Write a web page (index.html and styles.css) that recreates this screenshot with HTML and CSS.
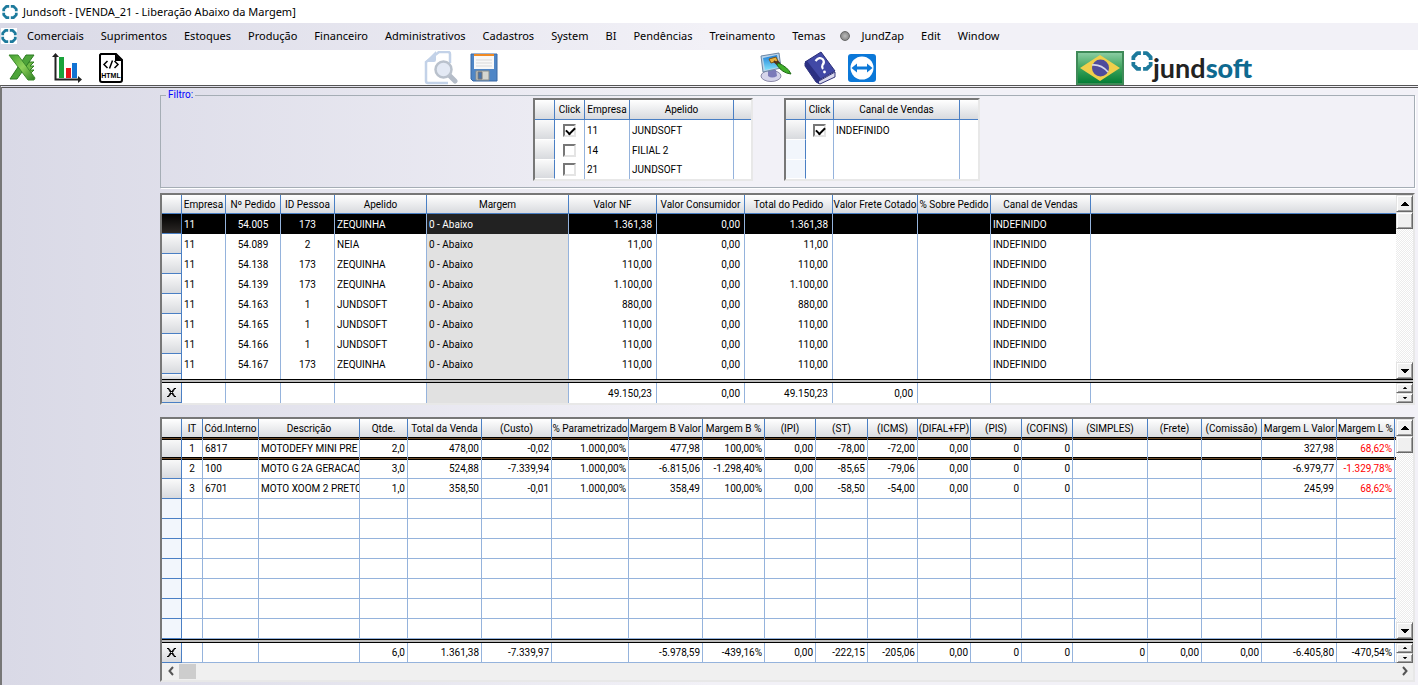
FILE: index.html
```html
<!DOCTYPE html>
<html lang="pt-BR">
<head>
<meta charset="utf-8">
<title>Jundsoft - [VENDA_21 - Liberação Abaixo da Margem]</title>
<link rel="stylesheet" href="styles.css">
</head>
<body>
<svg class="defs" width="0" height="0" aria-hidden="true">
  <symbol id="mark" viewBox="1 1 14 14">
    <path d="M7.300 3H5L2.500 5.500v1.800M8.700 3H11l2.500 2.500v1.800M7.300 13H5l-2.500-2.500V8.700M8.700 13H11l2.500-2.500V8.700" fill="none" stroke="#1d7a9c" stroke-width="2.400" stroke-linejoin="round"/>
  </symbol>
  <symbol id="up" viewBox="0 0 8 4"><path d="M3 0h2v1h1v1h1v1h1v1H0V3h1V2h1V1h1z"/></symbol>
  <symbol id="down" viewBox="0 0 8 4"><path d="M0 0h8v1H7v1H6v1H5v1H3V3H2V2H1V1H0z"/></symbol>
  <symbol id="sum" viewBox="0 0 9 9"><path d="M0 .5h2l2 3h1l2-3h2M0 8.500h2l2-3h1l2 3h2M3 3.500h3M3 5.500h3M1.500 1l2 3.500-2 3.500M7.500 1l-2 3.500 2 3.500" fill="none" stroke="#000"/></symbol>
</svg>

<header class="titlebar">
  <svg class="mark"><use href="#mark"/></svg>
  <h1>Jundsoft - [VENDA_21 - Liberação Abaixo da Margem]</h1>
</header>

<nav class="menu">
  <span class="mark-box"><svg class="mark"><use href="#mark"/></svg></span>
  <button>Comerciais</button>
  <button>Suprimentos</button>
  <button>Estoques</button>
  <button>Produção</button>
  <button>Financeiro</button>
  <button>Administrativos</button>
  <button>Cadastros</button>
  <button>System</button>
  <button>BI</button>
  <button>Pendências</button>
  <button>Treinamento</button>
  <button>Temas</button>
  <button class="zap"><span class="dot"></span>JundZap</button>
  <button>Edit</button>
  <button>Window</button>
</nav>

<div class="toolbar">
  <div class="tools files">
    <button aria-label="Excel">
      <svg width="28" height="28" viewBox="0 0 28 28">
        <defs><linearGradient id="xg" x1="0" y1="0" x2="1" y2="1"><stop offset="0" stop-color="#3f9d2f"/><stop offset=".5" stop-color="#8fd25a"/><stop offset="1" stop-color="#2b7d22"/></linearGradient></defs>
        <path d="M19 8h7l-4 4h4l-4 4h4l-4 4h-5z" fill="#6cb844" stroke="#2f7f25"/>
        <path d="M18 1h8L9 25H2z" fill="#4da43a" stroke="#2c7a22"/>
        <path d="M1 1h9l17 23-1 2h-6z" fill="url(#xg)" stroke="#3b8a2c"/>
      </svg>
    </button>
    <button aria-label="Gráfico">
      <svg width="32" height="32" viewBox="0 0 32 32">
        <path d="M4.500 4v23.500H28" fill="none" stroke="#222" stroke-width="2"/>
        <path d="M1 5l3.500-4L8 5zM27 24l4 3.500-4 3.500z" fill="#222"/>
        <path d="M8 5h5v21H8z" fill="#19a33b"/><path d="M15 16h5v10h-5z" fill="#e6161b"/><path d="M21 11h5v15h-5z" fill="#1273d3"/>
      </svg>
    </button>
    <button aria-label="HTML">
      <svg width="26" height="32" viewBox="0 0 26 32">
        <path d="M3 2h15l6 6v20q0 2-2 2H4q-2 0-2-2V3z" fill="#fff" stroke="#000" stroke-width="2"/>
        <path d="M17 2l7 7h-7z"/>
        <path d="M9.500 9L6 12.500 9.500 16M16.500 9l3.500 3.500-3.500 3.500M14.500 8.500l-3 8" fill="none" stroke="#000" stroke-width="1.500"/>
        <text x="13" y="25.500" class="html-label">HTML</text>
      </svg>
    </button>
  </div>
  <div class="tools">
    <button aria-label="Visualizar" disabled>
      <svg width="34" height="34" viewBox="0 0 34 34">
        <path d="M26 12V3q0-2-2-2h-9L2 11v19q0 2 2 2h20" fill="none" stroke="#c3d2e8" stroke-width="2.500"/>
        <path d="M12 0v9q0 2-2 2H1z" fill="#c3d2e8"/>
        <path d="M25 24l6 6" stroke="#b4bcc8" stroke-width="5" stroke-linecap="round"/>
        <circle cx="19.500" cy="18.500" r="8" fill="#e3e9f4" stroke="#b9c1cc" stroke-width="2.500"/>
      </svg>
    </button>
    <button aria-label="Salvar">
      <svg width="28" height="30" viewBox="0 0 28 30">
        <path d="M1 1h26v27H3l-2-2z" fill="#4f86c6" stroke="#3a68a4"/>
        <path d="M4 1h20v2H4z" fill="#f08a24"/><path d="M4 3h20v13H4z" fill="#f8f8f8"/>
        <path d="M6 7h16M6 10h16M6 13h16" stroke="#d9d9d9"/>
        <path d="M6 18h13v9H6z" fill="#d5d6d0" stroke="#8b8f8d"/><path d="M8 19h4v7H8z" fill="#4775ad" stroke="#777"/>
      </svg>
    </button>
  </div>
  <div class="tools">
    <button aria-label="Temas">
      <svg width="32" height="32" viewBox="0 0 32 32">
        <defs><linearGradient id="mg" x1="0" y1="0" x2="0" y2="1"><stop offset="0" stop-color="#1f7fd6"/><stop offset="1" stop-color="#7fe0fb"/></linearGradient></defs>
        <ellipse cx="11" cy="24" rx="10" ry="5.500" fill="#d5d4ea" stroke="#8a89a8"/>
        <path d="M8 18h8l1 6q-5 3-9 0z" fill="#7b7ab8"/>
        <path d="M1 4l18-3 2 15-18 4z" fill="#b9d4ea" stroke="#6d86a4"/><path d="M3 6l14-3 2 12-14 3z" fill="url(#mg)"/>
        <path d="M9 7l7-2 2 4-7 2z" fill="#e9b23e" stroke="#7a5418"/>
        <path d="M14 9l5 5M17 9l3 3" stroke="#50301a" stroke-width="2"/>
        <path d="M18 11q10 4 13 11-9-1-14-9z" fill="#3fae2a" stroke="#1d6a14"/>
      </svg>
    </button>
    <button aria-label="Ajuda">
      <svg width="32" height="34" viewBox="0 0 32 34">
        <path d="M1 12L15 30l16-9v5L16 33 12 31 1 15z" fill="#d9d9ec" stroke="#34367c"/>
        <path d="M1 11L17 1l14 19-16 9z" fill="#4149a6" stroke="#2a2e78"/>
        <path d="M1 11l2-1 14 18-2 2v3l-3-2L1 15z" fill="#2b3082"/>
        <path d="M11.500 10q4-5 7.500-1.500 2 3-.5 5.500-1 2 .5 4" fill="none" stroke="#fff" stroke-width="2.200"/><circle cx="20.500" cy="21" r="1.400" fill="#fff"/>
      </svg>
    </button>
    <button aria-label="Acesso remoto">
      <svg width="28" height="28" viewBox="0 0 28 28">
        <rect width="28" height="28" rx="3" fill="#0b78d8"/><circle cx="14" cy="14" r="11.500" fill="#fff"/>
        <path d="M3.500 14L9 9.500v3h10v-3l5.500 4.500-5.500 4.500v-3H9v3z" fill="#0b78d8"/>
      </svg>
    </button>
  </div>
  <div class="brand">
    <svg width="48" height="34" viewBox="0 0 48 34" role="img" aria-label="Brasil">
      <defs><linearGradient id="fg" x1="0" y1="0" x2="0" y2="1"><stop offset="0" stop-color="#8fcfa6"/><stop offset=".5" stop-color="#3da45c"/><stop offset="1" stop-color="#007a33"/></linearGradient></defs>
      <path d="M1 1h46v32H1z" fill="url(#fg)" stroke="#3f8a58" stroke-width="2"/>
      <path d="M24 4l20 13-20 13L4 17z" fill="#f0cf4b"/><circle cx="24.500" cy="17" r="8.500" fill="#4f4c9c"/>
      <path d="M16 14q9-1 16 7" fill="none" stroke="#d8d8ea" stroke-width="1.600"/>
    </svg>
    <span class="logo"><svg class="logo-mark"><use href="#mark"/></svg><span class="logo-word">jund<b>soft</b></span></span>
  </div>
</div>

<main class="desk">
  <section class="work">
    <fieldset class="filter">
      <legend>Filtro:</legend>
      <div class="frame company">
        <table class="sheet plain">
          <colgroup><col class="w20"><col class="w30"><col class="w45"><col class="w104"><col></colgroup>
          <thead><tr><th><th>Click<th>Empresa<th>Apelido<th></thead>
          <tbody>
            <tr><th><td class="c"><input type="checkbox" aria-label="Empresa 11" checked><td>11<td>JUNDSOFT<td>
            <tr><th><td class="c"><input type="checkbox" aria-label="Empresa 14"><td>14<td>FILIAL 2<td>
            <tr><th><td class="c"><input type="checkbox" aria-label="Empresa 21"><td>21<td>JUNDSOFT<td>
          </tbody>
        </table>
      </div>
      <div class="frame channel">
        <table class="sheet plain">
          <colgroup><col class="w20"><col class="w28"><col class="w126"><col></colgroup>
          <thead><tr><th><th>Click<th>Canal de Vendas<th></thead>
          <tbody>
            <tr><th><td class="c"><input type="checkbox" aria-label="Canal INDEFINIDO" checked><td>INDEFINIDO<td>
            <tr class="void"><th><td><td><td>
            <tr class="void"><th><td><td><td>
          </tbody>
        </table>
      </div>
    </fieldset>

    <div class="frame">
      <div class="pane">
        <table class="sheet orders">
          <colgroup><col class="w20"><col class="w44"><col class="w55"><col class="w54"><col class="w92"><col class="w142"><col class="w88"><col class="w88"><col class="w88"><col class="w85"><col class="w73"><col class="w100"><col></colgroup>
          <thead><tr><th><th>Empresa<th>Nº Pedido<th>ID Pessoa<th>Apelido<th>Margem<th>Valor NF<th>Valor Consumidor<th>Total do Pedido<th>Valor Frete Cotado<th>% Sobre Pedido<th>Canal de Vendas<th></thead>
          <tbody>
            <tr class="selected"><th><td>11<td>54.005<td>173<td>ZEQUINHA<td>0 - Abaixo<td>1.361,38<td>0,00<td>1.361,38<td><td><td>INDEFINIDO<td>
            <tr><th><td>11<td>54.089<td>2<td>NEIA<td>0 - Abaixo<td>11,00<td>0,00<td>11,00<td><td><td>INDEFINIDO<td>
            <tr><th><td>11<td>54.138<td>173<td>ZEQUINHA<td>0 - Abaixo<td>110,00<td>0,00<td>110,00<td><td><td>INDEFINIDO<td>
            <tr><th><td>11<td>54.139<td>173<td>ZEQUINHA<td>0 - Abaixo<td>1.100,00<td>0,00<td>1.100,00<td><td><td>INDEFINIDO<td>
            <tr><th><td>11<td>54.163<td>1<td>JUNDSOFT<td>0 - Abaixo<td>880,00<td>0,00<td>880,00<td><td><td>INDEFINIDO<td>
            <tr><th><td>11<td>54.165<td>1<td>JUNDSOFT<td>0 - Abaixo<td>110,00<td>0,00<td>110,00<td><td><td>INDEFINIDO<td>
            <tr><th><td>11<td>54.166<td>1<td>JUNDSOFT<td>0 - Abaixo<td>110,00<td>0,00<td>110,00<td><td><td>INDEFINIDO<td>
            <tr><th><td>11<td>54.167<td>173<td>ZEQUINHA<td>0 - Abaixo<td>110,00<td>0,00<td>110,00<td><td><td>INDEFINIDO<td>
            <tr class="cut"><th><td><td><td><td><td><td><td><td><td><td><td><td>
          </tbody>
        </table>
        <div class="scroll"><button aria-label="Subir"><svg><use href="#up"/></svg></button><span class="thumb"></span><button class="end" aria-label="Descer"><svg><use href="#down"/></svg></button></div>
      </div>
      <div class="split"></div>
      <div class="pane">
        <table class="sheet orders totals">
          <colgroup><col class="w20"><col class="w44"><col class="w55"><col class="w54"><col class="w92"><col class="w142"><col class="w88"><col class="w88"><col class="w88"><col class="w85"><col class="w73"><col class="w100"><col></colgroup>
          <tbody><tr><th><svg class="sum"><use href="#sum"/></svg><td><td><td><td><td><td>49.150,23<td>0,00<td>49.150,23<td>0,00<td><td><td></tbody>
        </table>
        <div class="spin"><button aria-label="Anterior"><svg><use href="#up"/></svg></button><button aria-label="Próximo"><svg><use href="#down"/></svg></button></div>
      </div>
    </div>

    <div class="frame items-frame">
      <div class="pane">
        <table class="sheet items">
          <colgroup><col class="w20"><col class="w21"><col class="w56"><col class="w101"><col class="w48"><col class="w74"><col class="w70"><col class="w77"><col class="w74"><col class="w62"><col class="w51"><col class="w52"><col class="w50"><col class="w53"><col class="w51"><col class="w51"><col class="w75"><col class="w54"><col class="w60"><col class="w75"><col class="w58"><col></colgroup>
          <thead><tr><th><th>IT<th>Cód.Interno<th>Descrição<th>Qtde.<th>Total da Venda<th>(Custo)<th>% Parametrizado<th>Margem B Valor<th>Margem B %<th>(IPI)<th>(ST)<th>(ICMS)<th>(DIFAL+FP)<th>(PIS)<th>(COFINS)<th>(SIMPLES)<th>(Frete)<th>(Comissão)<th>Margem L Valor<th>Margem L %<th></thead>
          <tbody>
            <tr class="current"><th><td>1<td>6817<td>MOTODEFY MINI PRE<td>2,0<td>478,00<td>-0,02<td>1.000,00%<td>477,98<td>100,00%<td>0,00<td>-78,00<td>-72,00<td>0,00<td>0<td>0<td><td><td><td>327,98<td>68,62%<td>
            <tr><th><td>2<td>100<td>MOTO G 2A GERACAO<td>3,0<td>524,88<td>-7.339,94<td>1.000,00%<td>-6.815,06<td>-1.298,40%<td>0,00<td>-85,65<td>-79,06<td>0,00<td>0<td>0<td><td><td><td>-6.979,77<td>-1.329,78%<td>
            <tr><th><td>3<td>6701<td>MOTO XOOM 2 PRETO<td>1,0<td>358,50<td>-0,01<td>1.000,00%<td>358,49<td>100,00%<td>0,00<td>-58,50<td>-54,00<td>0,00<td>0<td>0<td><td><td><td>245,99<td>68,62%<td>
            <tr class="void"><th><td><td><td><td><td><td><td><td><td><td><td><td><td><td><td><td><td><td><td><td><td>
            <tr class="void"><th><td><td><td><td><td><td><td><td><td><td><td><td><td><td><td><td><td><td><td><td><td>
            <tr class="void"><th><td><td><td><td><td><td><td><td><td><td><td><td><td><td><td><td><td><td><td><td><td>
            <tr class="void"><th><td><td><td><td><td><td><td><td><td><td><td><td><td><td><td><td><td><td><td><td><td>
            <tr class="void"><th><td><td><td><td><td><td><td><td><td><td><td><td><td><td><td><td><td><td><td><td><td>
            <tr class="void"><th><td><td><td><td><td><td><td><td><td><td><td><td><td><td><td><td><td><td><td><td><td>
            <tr class="void"><th><td><td><td><td><td><td><td><td><td><td><td><td><td><td><td><td><td><td><td><td><td>
          </tbody>
        </table>
        <div class="scroll"><button aria-label="Subir"><svg><use href="#up"/></svg></button><span class="thumb"></span><button class="end" aria-label="Descer"><svg><use href="#down"/></svg></button></div>
      </div>
      <div class="split"></div>
      <div class="pane">
        <table class="sheet items totals">
          <colgroup><col class="w20"><col class="w21"><col class="w56"><col class="w101"><col class="w48"><col class="w74"><col class="w70"><col class="w77"><col class="w74"><col class="w62"><col class="w51"><col class="w52"><col class="w50"><col class="w53"><col class="w51"><col class="w51"><col class="w75"><col class="w54"><col class="w60"><col class="w75"><col class="w58"><col></colgroup>
          <tbody><tr><th><svg class="sum"><use href="#sum"/></svg><td><td><td><td>6,0<td>1.361,38<td>-7.339,97<td><td>-5.978,59<td>-439,16%<td>0,00<td>-222,15<td>-205,06<td>0,00<td>0<td>0<td>0<td>0,00<td>0,00<td>-6.405,80<td>-470,54%<td></tbody>
        </table>
        <div class="spin"><button aria-label="Anterior"><svg><use href="#up"/></svg></button><button aria-label="Próximo"><svg><use href="#down"/></svg></button></div>
      </div>
      <div class="hscroll">
        <button aria-label="Esquerda"><svg viewBox="0 0 6 8"><path d="M5 0L1.500 4 5 8"/></svg></button>
        <span class="hthumb"></span>
        <button class="end" aria-label="Direita"><svg viewBox="0 0 6 8"><path d="M1 0l3.500 4L1 8"/></svg></button>
      </div>
    </div>
  </section>
</main>
</body>
</html>
```
FILE: styles.css
```css
* { box-sizing: border-box; }

body {
  margin: 0;
  min-height: 100vh;
  display: flex;
  flex-direction: column;
  background: #fff;
  color: #000;
  font: 11px/16px "Noto Sans", "Open Sans", sans-serif;
}

button {
  margin: 0;
  padding: 0;
  border: 0;
  background: none;
  color: inherit;
  font: inherit;
}

.defs { position: absolute; }
.mark { display: block; width: 16px; height: 16px; }

/* Title and menu */
.titlebar {
  display: flex;
  align-items: center;
  gap: 5px;
  height: 23px;
  padding-left: 2px;
}
.titlebar h1 { margin: 0; font-size: 11px; font-weight: 400; }

.menu {
  display: flex;
  align-items: center;
  gap: 17px;
  height: 27px;
  padding-bottom: 2px;
  background: linear-gradient(90deg, #d9d9e6, #f2f1f7 50%);
  white-space: nowrap;
}
.mark-box { margin: 0 -7px 0 1px; background: #fff; }
.zap { display: flex; align-items: center; gap: 12px; margin-left: -3px; }
.dot {
  width: 10px;
  height: 10px;
  border: 1px solid #666;
  border-radius: 50%;
  background: radial-gradient(#bbb, #777);
}

/* Toolbar */
.toolbar {
  display: grid;
  grid-template-columns: 424fr 336fr 316fr 342fr;
  height: 35px;
}
.tools, .brand { display: flex; align-items: center; gap: 12px; }
.tools button { display: flex; }
.files { padding-left: 8px; gap: 15px; }
.html-label { font: 700 7px "Liberation Sans", sans-serif; text-anchor: middle; }
.brand { gap: 7px; }
.logo { display: flex; padding-bottom: 4px; }
.logo-mark { width: 22px; height: 22px; }
.logo-word { padding-top: 4px; font: 700 27px/27px Lato, sans-serif; color: #222; }
.logo-word b { color: #0f6a90; }

/* Work area */
.desk {
  flex: 1;
  padding: 4px 3px 3px 158px;
  border-top: 3px double #555;
  border-left: 2px solid #777;
  background: linear-gradient(90deg, #d9d9e6, #f2f1f7 50%);
  font: 10px/13px Roboto, "Liberation Sans", sans-serif;
}
.work { display: flex; flex-direction: column; }

.filter {
  display: grid;
  grid-template-columns: 220px 196px;
  column-gap: 31px;
  margin: 0 0 5px;
  padding: 0 0 6px 372px;
  border: 1px solid #a5adb5;
  box-shadow: 1px 1px #fff;
}
.filter legend {
  height: 6px;
  margin-left: -367px;
  padding: 0 2px;
  color: #00f;
  line-height: 6px;
}

.frame {
  border: 2px solid;
  border-color: #777 #e8e8e8 #e8e8e8 #777;
  background: #fff;
}
.items-frame { margin-top: 12px; }
.pane { display: flex; }

/* Data sheets */
.sheet {
  width: 100%;
  table-layout: fixed;
  border-collapse: separate;
  border-spacing: 0;
}
.pane .sheet { flex: 1; min-width: 0; width: 0; }
.sheet th, .sheet td {
  height: 20px;
  padding: 0 2px;
  overflow: hidden;
  white-space: nowrap;
  text-align: left;
  font-weight: 400;
  border-right: 1px solid #95b3dc;
}
.sheet thead th {
  height: 19px;
  padding: 0;
  text-align: center;
  background: linear-gradient(#fff, #d8dade);
  border-right-color: #4a7fc4;
  border-bottom: 1px solid #4a7fc4;
}
.sheet tbody th {
  padding: 0;
  background: linear-gradient(#fafafa, #d8dade);
  border-right-color: #4a7fc4;
  border-bottom: 1px solid #4a7fc4;
}
.sheet tr > :last-child { border-right: 0; }
.sheet.plain thead th { height: 20px; }
.sheet.plain tbody th { border-bottom-color: #fff; }
.sheet.plain tbody tr:last-child > * { height: 19px; }
.sheet .c { text-align: center; }
.sheet .void th { background: #f2f6fc; }

.orders td:nth-child(3), .orders td:nth-child(4) { text-align: center; }
.orders td:nth-child(6) { background: #e1e1e1; }
.orders td:nth-child(n+7):nth-child(-n+11) { padding-right: 4px; text-align: right; }
.orders .selected td { background: #000; color: #fff; }
.orders .selected td:nth-child(6) { background: #222; }
.orders .selected th { background: linear-gradient(#000, #2c2826); }
.orders .cut > * { height: 5px; border-bottom: 0; }

.sheet.items thead th {
  height: 20px;
  border-bottom-color: #6b4824;
  box-shadow: inset 0 -1px #000;
}
.items tbody td { border-bottom: 1px solid #95b3dc; text-align: right; }
.items tbody td:nth-child(2) { text-align: center; }
.items tbody td:nth-child(3), .items tbody td:nth-child(4) { text-align: left; }
.items:not(.totals) td:nth-child(21) { color: #f00; }
.sheet.items .current > * {
  border-bottom-color: #6b4824;
  box-shadow: inset 0 1px #000, inset 0 -1px #000;
}
.items .current + tr > * { box-shadow: inset 0 1px #000; }
.totals tbody th { text-align: center; }
.sum { display: block; width: 9px; height: 9px; margin: 0 auto; }

.split { height: 4px; border: solid #000; border-width: 1px 0; background: #bbb; }

input[type="checkbox"] {
  appearance: none;
  display: block;
  width: 13px;
  height: 13px;
  margin: 0 auto;
  border: 2px solid;
  border-color: #777 #e4e4e4 #e4e4e4 #777;
  background: #fff;
}
input[type="checkbox"]:checked::before {
  content: "";
  display: block;
  width: 7px;
  height: 4px;
  margin-top: 1px;
  margin-left: 1px;
  border: solid #000;
  border-width: 0 0 2px 2px;
  rotate: -45deg;
}

/* Scroll bars */
.scroll {
  display: flex;
  flex-direction: column;
  width: 17px;
  background: repeating-conic-gradient(#fff 0 25%, #ececec 0 50%) 0 0 / 2px 2px;
}
.scroll button, .thumb, .spin button {
  display: flex;
  align-items: center;
  justify-content: center;
  height: 17px;
  background: #f0f0f0;
  border: 1px solid;
  border-color: #e3e3e3 #696969 #696969 #e3e3e3;
  box-shadow: inset 1px 1px #fff, inset -1px -1px #a0a0a0;
}
.scroll svg { width: 8px; height: 4px; }
.end { margin-top: auto; }
.spin { display: flex; flex-direction: column; width: 17px; }
.spin button { height: 10px; }
.spin svg { width: 4px; height: 2px; }

.hscroll {
  display: flex;
  align-items: center;
  height: 17px;
  background: #f0f0f0;
}
.hscroll button { width: 17px; height: 17px; }
.hscroll svg { width: 6px; height: 8px; overflow: visible; }
.hscroll path { fill: none; stroke: #555; stroke-width: 2; }
.hscroll .end { margin: 0 0 0 auto; }
.hthumb { width: 17px; height: 15px; background: #cdcdcd; }

/* Column widths */
.w20 { width: 20px; }
.w21 { width: 21px; }
.w28 { width: 28px; }
.w30 { width: 30px; }
.w44 { width: 44px; }
.w45 { width: 45px; }
.w48 { width: 48px; }
.w50 { width: 50px; }
.w51 { width: 51px; }
.w52 { width: 52px; }
.w53 { width: 53px; }
.w54 { width: 54px; }
.w55 { width: 55px; }
.w56 { width: 56px; }
.w58 { width: 58px; }
.w60 { width: 60px; }
.w62 { width: 62px; }
.w70 { width: 70px; }
.w73 { width: 73px; }
.w74 { width: 74px; }
.w75 { width: 75px; }
.w77 { width: 77px; }
.w85 { width: 85px; }
.w88 { width: 88px; }
.w92 { width: 92px; }
.w100 { width: 100px; }
.w101 { width: 101px; }
.w104 { width: 104px; }
.w126 { width: 126px; }
.w142 { width: 142px; }
```
